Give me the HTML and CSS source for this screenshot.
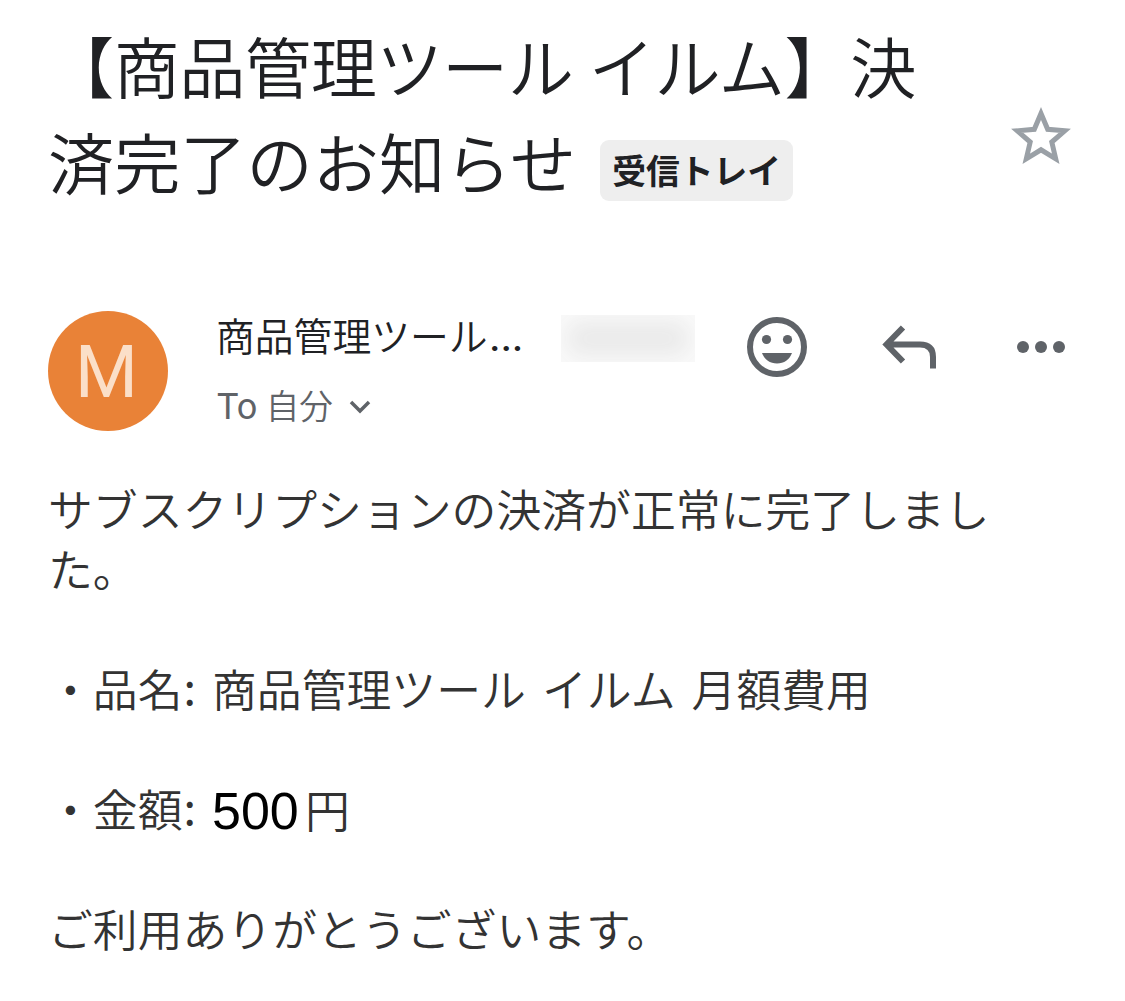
FILE: index.html
```html
<!DOCTYPE html>
<html lang="ja">
<head>
<meta charset="utf-8">
<title>決済完了のお知らせ</title>
<link rel="stylesheet" href="styles.css">
</head>
<body>
<main class="mail">
  <header class="subject">
    <h1 class="title"><span class="line first"><span>【商品管理ツール<span class="space"> </span>イルム】</span><span class="wrap-char">決</span></span><span class="line second"><span class="second-text">済完了のお知らせ</span><span class="label">受信トレイ</span></span></h1>
    <svg class="star" viewBox="0 0 60 60" width="60" height="60"><path d="M30 7.500 36.700 23.300 53.800 24.800 40.800 36 44.700 52.800 30 43.800 15.300 52.800 19.200 36 6.200 24.800 23.300 23.300Z"/></svg>
  </header>
  <section class="sender">
    <div class="avatar"><span class="initial">M</span></div>
    <div class="who">
      <div class="name-row"><span class="name">商品管理ツール<span class="dots">...</span></span><span class="redacted"></span></div>
      <div class="to-row"><span class="to"><span class="latin">To</span> 自分</span><svg class="chevron" width="22" height="14" viewBox="0 0 22 14"><path d="M2 2 11 11 20 2"/></svg></div>
    </div>
    <div class="actions">
      <svg class="smile" width="62" height="62" viewBox="0 0 62 62"><circle class="ring" cx="31" cy="31" r="27"/><circle cx="20.500" cy="23.500" r="4.600"/><circle cx="41.500" cy="23.500" r="4.600"/><path d="M16 37H46C43.500 43.500 38 47.500 31 47.500S18.500 43.500 16 37Z"/></svg>
      <svg class="reply" width="56" height="46" viewBox="0 0 56 46"><path d="M22 3.500 5.500 20.500 22 37.500M5.500 20.500H39Q52 20.500 52 33V44.500"/></svg>
      <svg class="more" width="50" height="14" viewBox="0 0 50 14"><circle cx="7" cy="7" r="6"/><circle cx="25" cy="7" r="6"/><circle cx="43" cy="7" r="6"/></svg>
    </div>
  </section>
  <article class="body">
    <p><span class="message">サブスクリプションの決済が正常に完了しまし<br>た。</span></p>
    <p><span class="item">・品名<span class="colon">:</span> 商品管理ツール イルム 月額費用</span></p>
    <p class="price"><span class="price-label">・金額<span class="colon">:</span></span><span class="amount">500</span><span class="yen">円</span></p>
    <p><span class="thanks">ご利用ありがとうございます。</span></p>
  </article>
</main>
</body>
</html>
```
FILE: styles.css
```css
* { box-sizing: border-box; }
body { margin: 0; background: #fff; color: #202124; font-family: "Noto Sans CJK JP", sans-serif; font-weight: 350; }
.mail { width: 1125px; height: 1001px; padding: 16px 48px 0; overflow: hidden; }
.subject { display: flex; justify-content: space-between; height: 294px; }
.title { margin: 0; font-size: 66.200px; font-weight: 350; line-height: 96px; }
.line { display: flex; align-items: center; height: 96px; white-space: nowrap; }
.first { letter-spacing: -0.500px; }
.space { word-spacing: 1px; }
.wrap-char { margin-left: 0; }
.second { gap: 23px; }
.label { height: 61px; padding: 0 12px; margin: 21px 0 0 1px; border-radius: 9px; background: #eee; font-size: 33.800px; font-weight: 600; line-height: 60px; }
.star { margin: 90px 6px 0 0; fill: none; stroke: #9aa0a6; stroke-width: 5; }
.sender { display: flex; height: 168px; }
.avatar { display: flex; align-items: center; justify-content: center; width: 120px; height: 120px; margin-top: 1px; border-radius: 50%; background: #e98237; color: #fbdfc8; font: 72px/120px Roboto, sans-serif; }
.initial { margin: 3px 3px 0 0; }
.who { width: 480px; margin-left: 48px; }
.name-row { display: flex; align-items: center; height: 56px; font-size: 38.800px; line-height: 50px; white-space: nowrap; }
.name { width: 345px; margin-top: -5px; }
.dots { margin-left: 2px; font-family: Roboto, sans-serif; font-weight: 500; letter-spacing: 0.600px; }
.redacted { width: 134px; height: 47px; background: #e9e9e9; box-shadow: inset 0 0 24px 6px #fbfbfb; }
.to-row { display: flex; align-items: center; height: 78px; gap: 16px; color: #5f6368; font-size: 33.600px; line-height: 48px; }
.latin { margin: 0 1px; font: 400 36px Roboto, sans-serif; }
.chevron { margin-top: 4px; fill: none; stroke: #5f6368; stroke-width: 3.500; }
.actions { display: flex; align-items: center; height: 74px; margin-left: 50px; fill: #5f6368; }
.ring, .reply { fill: none; stroke: #5f6368; stroke-width: 6; }
.reply { margin-left: 73px; }
.more { margin-left: 79px; }
.body { color: #333; font-size: 44.850px; line-height: 60px; }
.body p { margin: 0 0 60px; white-space: nowrap; }
.colon { margin-left: 1px; font-weight: 400; line-height: 1; vertical-align: 2px; }
.item { word-spacing: 6px; }
.price { display: flex; align-items: center; height: 60px; }
.price-label { width: 164px; }
.amount { width: 93px; padding-top: 5px; color: #000; font: 52px/60px "Liberation Sans", sans-serif; }
.yen { padding-top: 2px; }
```
